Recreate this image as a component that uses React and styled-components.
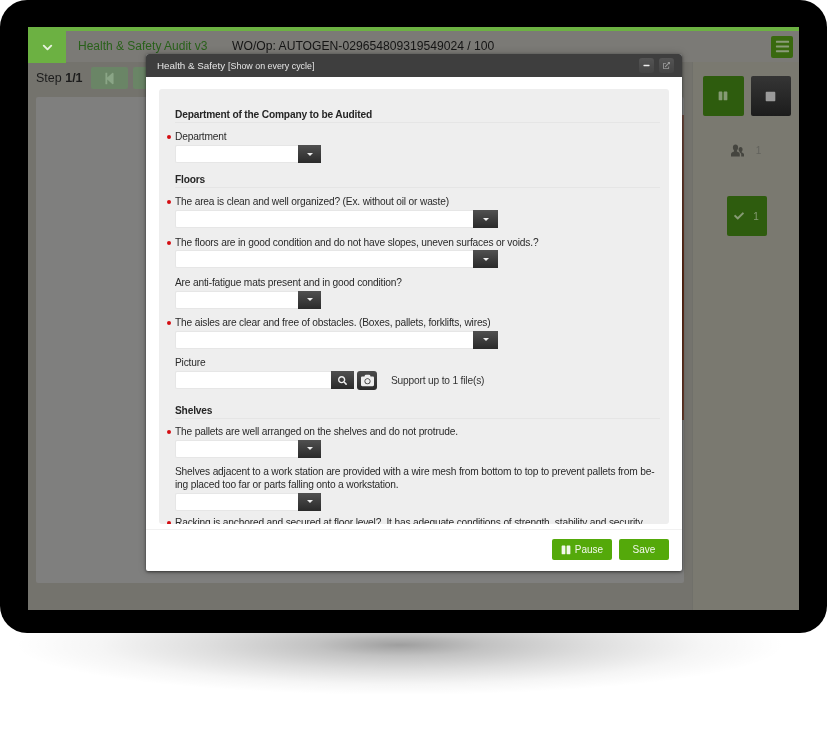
import React from "react";
import styled, { createGlobalStyle } from "styled-components";
import { ChevronDown } from "lucide-react";
import { FaBars, FaPause, FaStop, FaCheck, FaSearch, FaCamera, FaStepBackward, FaExternalLinkAlt, FaMinus } from "react-icons/fa";

const Global = createGlobalStyle`
  html, body { margin: 0; background: #fff; }
  body { font-family: "Liberation Sans", Arial, sans-serif; }
  * { box-sizing: border-box; }
`;

const Page = styled.div`
  width: 828px;
  height: 735px;
  overflow: hidden;
  background: #fff;
`;
const Device = styled.div`
  width: 827px;
  height: 633px;
  padding: 27px 28px 23px 28px;
  background: #000;
  border-radius: 27px;
`;
const Shadow = styled.div`
  height: 102px;
  background: radial-gradient(
    ellipse 385px 50px at 400px 12px,
    rgba(0,0,0,.38) 0,
    rgba(0,0,0,.24) 22%,
    rgba(0,0,0,.13) 50%,
    rgba(0,0,0,.04) 78%,
    rgba(0,0,0,0) 100%
  );
`;
const Screen = styled.div`
  position: relative;
  width: 771px;
  height: 583px;
  display: flex;
  flex-direction: column;
  background: #74736d;
  filter: blur(0.45px);
`;
const Stripe = styled.div`
  height: 4px;
  background: #6cb142;
`;
const Header = styled.div`
  height: 31px;
  display: flex;
  align-items: center;
  background: #7b7a76;
`;
const Toggle = styled.div`
  width: 38px;
  height: 32px;
  margin-bottom: -1px;
  display: flex;
  align-items: center;
  justify-content: center;
  background: #6cb142;
  color: #e8f2df;
`;
const AuditTitle = styled.div`
  margin-left: 12px;
  width: 154px;
  margin-bottom: 2px;
  font-size: 12px;
  color: #29611a;
`;
const WorkOrder = styled.div`
  font-size: 12.15px;
  margin-bottom: 2px;
  color: #151515;
  flex: 1;
`;
const Menu = styled.div`
  width: 22px;
  height: 22px;
  margin-right: 6px;
  border-radius: 2px;
  background: #39690f;
  color: #8a9c78;
  display: flex;
  align-items: center;
  justify-content: center;
  font-size: 15px;
`;
const Body = styled.div`
  flex: 1;
  display: flex;
  min-height: 0;
`;
const Main = styled.div`
  width: 664px;
  padding: 5px 0 27px 8px;
  display: flex;
  flex-direction: column;
`;
const StepRow = styled.div`
  height: 30px;
  display: flex;
  align-items: flex-start;
  gap: 5px;
`;
const StepText = styled.div`
  width: 50px;
  margin-top: 4px;
  font-size: 12.5px;
  color: #1c1c1c;
  b { font-weight: bold; }
`;
const StepButton = styled.div`
  width: 37px;
  height: 22px;
  border-radius: 2px;
  background: #6a8566;
  color: #8aa586;
  display: flex;
  align-items: center;
  justify-content: center;
  font-size: 13px;
`;
const Canvas = styled.div`
  flex: 1;
  width: 648px;
  border-radius: 2px;
  background: #7f7f7e;
  position: relative;
`;
const Streak = styled.div`
  position: absolute;
  right: 0;
  top: 18px;
  width: 2px;
  height: 305px;
  background: linear-gradient(to bottom, #6d4a40, #5e2a16 55%, #6d4030);
`;
const Side = styled.div`
  flex: 1;
  border-left: 1px solid #70706a;
  background: #7a7970;
  display: flex;
  flex-direction: column;
  align-items: center;
  padding: 14px 0 0 1px;
`;
const SideRow = styled.div`
  display: flex;
  gap: 7px;
`;
const Square = styled.div`
  width: ${p => (p.$dark || p.$narrow ? "40px" : "41px")};
  height: 40px;
  border-radius: 2px;
  display: flex;
  align-items: center;
  justify-content: center;
  background: ${p => (p.$dark ? "linear-gradient(#353535,#1c1c1c)" : "#2e5c0e")};
  color: ${p => (p.$dark ? "#9a9a9a" : "#869a74")};
  font-size: ${p => (p.$dark ? "11px" : "10px")};
  gap: 9px;
`;
const Users = styled.div`
  margin-top: 27px;
  margin-left: -1px;
  height: 14px;
  display: flex;
  align-items: center;
  gap: 12px;
  color: #45453f;
  span { font-size: 10px; color: #62625c; }
`;
const CheckWrap = styled.div`
  margin-top: 39px;
  span { font-size: 10px; color: #869a74; }
`;
const Modal = styled.div`
  position: absolute;
  left: 118px;
  top: 27px;
  width: 536px;
  height: 517px;
  display: flex;
  flex-direction: column;
  background: #fff;
  border-radius: 3px 3px 2px 2px;
  box-shadow: 0 1px 3px rgba(0,0,0,.55), 0 0 8px rgba(0,0,0,.2);
`;
const ModalHead = styled.div`
  height: 23px;
  padding: 0 8px 0 11px;
  display: flex;
  align-items: center;
  background: #3e3e3e;
  border-radius: 3px 3px 0 0;
  color: #e6e6e6;
  font-size: 9.8px;
  small { font-size: 8.9px; margin-left: 3px; }
`;
const HeadTitle = styled.div`
  flex: 1;
`;
const HeadButton = styled.div`
  width: 15px;
  height: 15px;
  margin-left: 5px;
  border-radius: 3px;
  background: linear-gradient(#545454, #444);
  color: ${p => (p.$dim ? "#999" : "#eee")};
  font-size: 7px;
  display: flex;
  align-items: center;
  justify-content: center;
`;
const ModalBody = styled.div`
  flex: 1;
  min-height: 0;
  padding: 12px 13px 0;
`;
const Sheet = styled.div`
  height: 435px;
  overflow: hidden;
  padding: 19px 9px 0 16px;
  background: #eee;
  border-radius: 3px;
  color: #2a2a2a;
  font-size: 10.2px;
  letter-spacing: -0.18px;
`;
const SectionTitle = styled.div`
  height: 15px;
  line-height: 14px;
  margin: ${p => p.$top || 0}px 0 ${p => p.$after || 8.25}px;
  border-bottom: 1px solid #e5e5e5;
  font-weight: bold;
  color: #262626;
`;
const Field = styled.div`
  margin-bottom: ${p => p.$gap || 8.5}px;
`;
const Label = styled.div`
  position: relative;
  line-height: 12.5px;
  margin-bottom: 1.25px;
  &::before {
    content: "";
    display: ${p => (p.$required ? "block" : "none")};
    position: absolute;
    left: -8px;
    top: 4px;
    width: 4px;
    height: 4px;
    border-radius: 50%;
    background: #d40d12;
  }
`;
const Control = styled.div`
  display: flex;
  align-items: center;
  height: 18px;
`;
const Input = styled.div`
  width: ${p => p.$w}px;
  height: 18px;
  background: #fff;
  border: 1px solid #e6e6e6;
  border-right: 0;
  border-radius: 2px 0 0 2px;
`;
const Drop = styled.div`
  width: ${p => p.$w || 23}px;
  height: 18px;
  background: linear-gradient(#505050, #2a2a2a);
  display: flex;
  align-items: center;
  justify-content: center;
  color: #eee;
  font-size: 9px;
  &.caret::after {
    content: "";
    width: 0;
    height: 0;
    border-left: 3px solid transparent;
    border-right: 3px solid transparent;
    border-top: 3px solid #eee;
  }
`;
const Camera = styled.div`
  width: 20px;
  height: 19px;
  margin-left: 3px;
  margin-right: 14px;
  border-radius: 3px;
  background: linear-gradient(#4c4c4c, #2a2a2a);
  color: #eee;
  font-size: 13px;
  display: flex;
  align-items: center;
  justify-content: center;
`;
const Note = styled.div`
  margin-top: 1px;
  color: #333;
`;
const Footer = styled.div`
  height: 42px;
  margin-top: 5px;
  padding: 9px 13px 0;
  border-top: 1px solid #f1f1f1;
  display: flex;
  justify-content: flex-end;
  gap: 7px;
`;
const GreenButton = styled.div`
  width: ${p => p.$w}px;
  height: 21px;
  border-radius: 2px;
  background: #54a90a;
  color: #f2f8ec;
  font-size: 10px;
  display: flex;
  align-items: center;
  justify-content: center;
  gap: 4px;
  svg { font-size: 10px; }
`;

const UsersIcon = () => (
  <svg width="13" height="13" viewBox="0 0 13 13" fill="currentColor" aria-hidden="true">
    <path d="M4.5 0.5c1.6 0 2.6 1.3 2.6 3 0 1.2-.5 2.3-1.2 2.9v1.2c1.6.5 2.9 1.2 2.9 2.6V12.5H0v-2.3c0-1.4 1.4-2.1 3-2.6V6.4C2.4 5.8 1.9 4.7 1.9 3.5c0-1.7 1-3 2.6-3z" />
    <path d="M9.6 3c1.2 0 2 1 2 2.4 0 .9-.4 1.7-.9 2.2v.8c1.2.4 2.3 1 2.3 2.1v2h-2.8v-2c0-1-.7-1.8-1.7-2.3V7.6C8 7.1 7.6 6.3 7.6 5.4 7.6 4 8.4 3 9.6 3z" />
  </svg>
);

const Select = ({ w }) => (
  <Control>
    <Input $w={w} />
    <Drop className="caret" $w={w > 200 ? 25 : 23} />
  </Control>
);

const Q = ({ required, w, gap, children }) => (
  <Field $gap={gap}>
    <Label $required={required}>{children}</Label>
    <Select w={w} />
  </Field>
);

export default function App() {
  return (
    <Page>
      <Global />
      <Device>
        <Screen>
          <Stripe />
          <Header>
            <Toggle><ChevronDown size={15} strokeWidth={3} /></Toggle>
            <AuditTitle>Health &amp; Safety Audit v3</AuditTitle>
            <WorkOrder>WO/Op: AUTOGEN-029654809319549024 / 100</WorkOrder>
            <Menu><FaBars /></Menu>
          </Header>
          <Body>
            <Main>
              <StepRow>
                <StepText>Step <b>1/1</b></StepText>
                <StepButton><FaStepBackward /></StepButton>
                <StepButton><FaStepBackward /></StepButton>
              </StepRow>
              <Canvas><Streak /></Canvas>
            </Main>
            <Side>
              <SideRow>
                <Square><FaPause /></Square>
                <Square $dark><FaStop /></Square>
              </SideRow>
              <Users><UsersIcon /><span>1</span></Users>
              <CheckWrap>
                <Square $narrow><FaCheck /><span>1</span></Square>
              </CheckWrap>
            </Side>
          </Body>
          <Modal>
            <ModalHead>
              <HeadTitle>Health &amp; Safety<small>[Show on every cycle]</small></HeadTitle>
              <HeadButton><FaMinus /></HeadButton>
              <HeadButton $dim><FaExternalLinkAlt /></HeadButton>
            </ModalHead>
            <ModalBody>
              <Sheet>
                <SectionTitle>Department of the Company to be Audited</SectionTitle>
                <Q required w={123}>Department</Q>
                <SectionTitle $top={10}>Floors</SectionTitle>
                <Q required w={298}>The area is clean and well organized? (Ex. without oil or waste)</Q>
                <Q required w={298}>The floors are in good condition and do not have slopes, uneven surfaces or voids.?</Q>
                <Q w={123}>Are anti-fatigue mats present and in good condition?</Q>
                <Q required w={298}>The aisles are clear and free of obstacles. (Boxes, pallets, forklifts, wires)</Q>
                <Field>
                  <Label>Picture</Label>
                  <Control>
                    <Input $w={156} />
                    <Drop $w={23}><FaSearch /></Drop>
                    <Camera><FaCamera /></Camera>
                    <Note>Support up to 1 file(s)</Note>
                  </Control>
                </Field>
                <SectionTitle $top={14.5} $after={7.5}>Shelves</SectionTitle>
                <Q required w={123}>The pallets are well arranged on the shelves and do not protrude.</Q>
                <Q w={123} gap={6}>Shelves adjacent to a work station are provided with a wire mesh from bottom to top to prevent pallets from be&shy;ing placed too far or parts falling onto a workstation.</Q>
                <Q required w={123}>Racking is anchored and secured at floor level?. It has adequate conditions of strength, stability and security.</Q>
              </Sheet>
            </ModalBody>
            <Footer>
              <GreenButton $w={60}><FaPause />Pause</GreenButton>
              <GreenButton $w={50}>Save</GreenButton>
            </Footer>
          </Modal>
        </Screen>
      </Device>
      <Shadow />
    </Page>
  );
}
